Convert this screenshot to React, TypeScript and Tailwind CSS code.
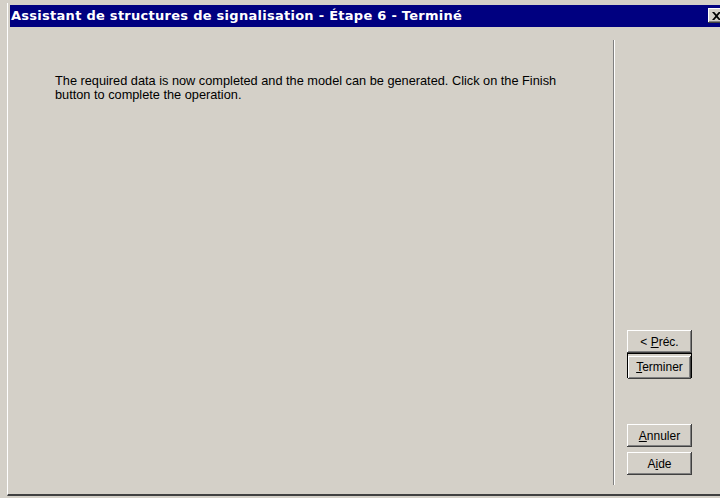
import { ReactNode } from 'react';

// Classic 3D raised button edges
const raised =
  'shadow-[inset_-1px_-1px_#404040,inset_1px_1px_#ffffff,inset_-2px_-2px_#808080,inset_2px_2px_#d4d0c8]';

function WizButton({ children, isDefault = false }: { children: ReactNode; isDefault?: boolean }) {
  if (isDefault) {
    return (
      <div className="w-[65px] h-[25px] border border-black">
        <button className={`w-full h-full bg-[#d4d0c8] text-[12px] text-black ${raised}`}>{children}</button>
      </div>
    );
  }
  return (
    <button className={`w-[65px] h-[23px] bg-[#d4d0c8] text-[12px] text-black ${raised}`}>{children}</button>
  );
}

export default function App() {
  return (
    <div className="w-[720px] h-[498px] overflow-hidden bg-[#d4d0c8] pl-[7px] pt-[3px]" style={{ fontFamily: '"Liberation Sans", Arial, sans-serif' }}>
      <div className="h-[493px] flex flex-col border-l border-l-white border-b-2 border-b-[#404040] pl-[2px] pt-[2px]">
        {/* title bar */}
        <div className="h-[22px] bg-[#000080] flex items-center pl-[1px] pb-[2px] relative">
          <span
            className="text-white font-bold text-[13px] tracking-[0.27px] leading-none"
            style={{ fontFamily: '"DejaVu Sans", Tahoma, sans-serif' }}
          >
            Assistant de structures de signalisation - Étape 6 - Terminé
          </span>
          <div className={`absolute left-[698px] top-[3px] w-[16px] h-[15px] bg-[#d4d0c8] flex items-center justify-center ${raised}`}>
            <svg width="9" height="8" viewBox="0 0 9 8">
              <path d="M0 0h2.2L4.5 2.6 6.8 0H9L5.6 4 9 8H6.8L4.5 5.4 2.2 8H0l3.4-4z" fill="#000" />
            </svg>
          </div>
        </div>

        {/* body */}
        <div className="flex-1 flex">
          <div className="w-[603px] pl-[45px] pt-[47px]">
            <p className="text-[12.75px] leading-[14px] text-black w-[520px]">
              The required data is now completed and the model can be generated. Click on the Finish button to complete the operation.
            </p>
          </div>
          <div className="mt-[13px] mb-[9px] w-[2px] border-l border-l-[#808080] border-r border-r-white" />
          <div className="flex-1 pl-[12px] flex flex-col justify-end pb-[19px]">
            <WizButton>
              &lt; <u>P</u>réc.
            </WizButton>
            <WizButton isDefault>
              <u>T</u>erminer
            </WizButton>
            <div className="h-[46px]" />
            <div className="flex flex-col gap-[5px]">
              <WizButton>
                <u>A</u>nnuler
              </WizButton>
              <WizButton>
                A<u>i</u>de
              </WizButton>
            </div>
          </div>
        </div>
      </div>
    </div>
  );
}
